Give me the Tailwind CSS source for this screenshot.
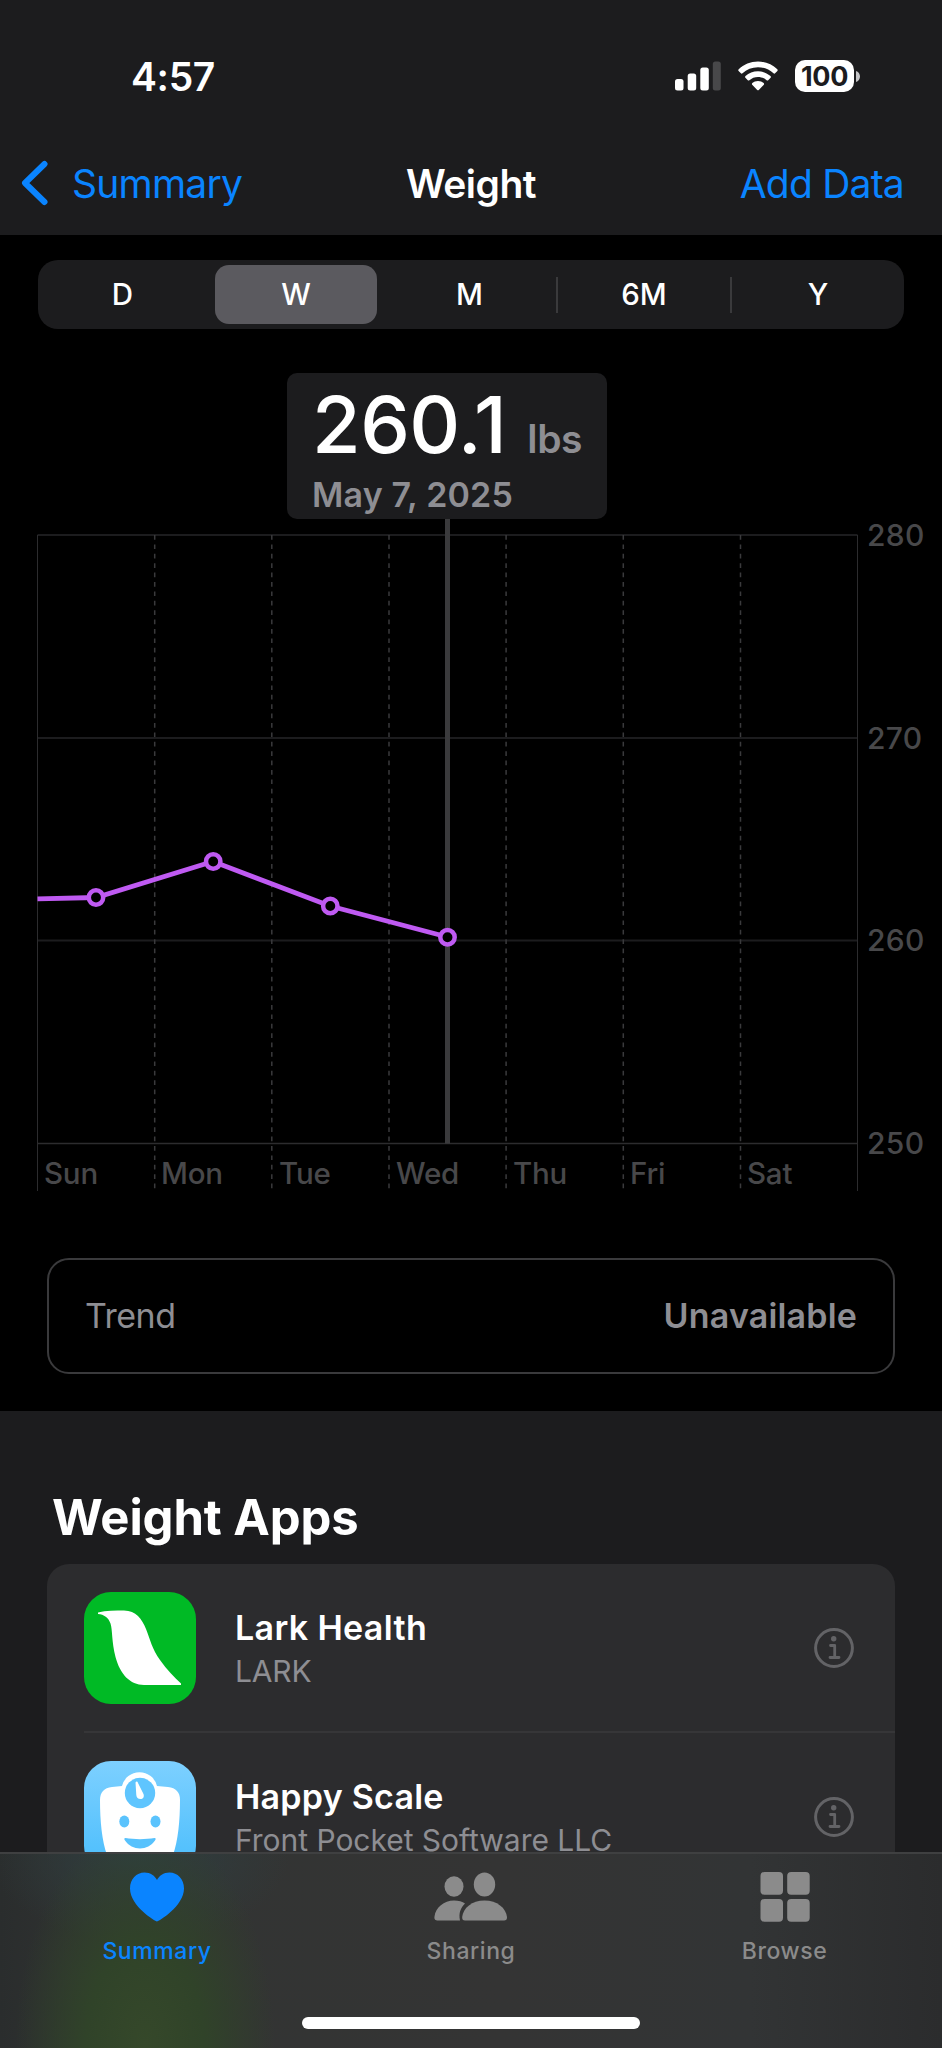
<!DOCTYPE html>
<html lang="en">
<head>
    <meta charset="UTF-8">
    <meta name="viewport" content="width=device-width, initial-scale=1.0">
    <title>Weight</title>
    <script src="https://cdn.jsdelivr.net/npm/@tailwindcss/browser@4"></script>
</head>
<body class="bg-black font-['Inter',sans-serif] text-white">
    <div class="relative flex h-[2048px] w-[942px] flex-col overflow-hidden">
        <!-- Status bar + navigation -->
        <header class="h-[235px] shrink-0 bg-[#1c1c1e]">
            <div class="flex h-[152px] items-center justify-between pl-[131px] pr-[82px]">
                <span class="text-[39px] font-semibold leading-none tracking-[-0.01em]">4:57</span>
                <div class="flex items-center">
                    <svg class="h-[30px] w-[46px]" viewBox="0 0 46 30">
                        <rect x="0" y="18" width="8.5" height="11.5" rx="2.5" fill="#fff"/>
                        <rect x="12.7" y="12.5" width="8.5" height="17" rx="2.5" fill="#fff"/>
                        <rect x="25.3" y="6.5" width="8.5" height="23" rx="2.5" fill="#fff"/>
                        <rect x="37.8" y="0.5" width="8" height="29" rx="2.5" fill="#48484a"/>
                    </svg>
                    <svg class="ml-[17px] h-[30px] w-[40px]" viewBox="0 0 40 30" fill="#fff">
                        <path d="M20 0.5c7.500 0 14.300 2.900 19.300 7.700.5.5.5 1.200.1 1.700l-2.300 2.400c-.4.5-1.200.5-1.600 0C31.400 8.400 26 6.200 20 6.200S8.600 8.400 4.500 12.300c-.5.500-1.200.500-1.600 0L.6 9.900c-.5-.5-.4-1.200.1-1.700C5.700 3.400 12.500.5 20 .5z"/>
                        <path d="M20 10.300c4.800 0 9.200 1.800 12.500 4.800.5.500.5 1.200.1 1.700l-2.400 2.400c-.4.4-1.100.4-1.600 0-2.300-2-5.300-3.300-8.600-3.300s-6.300 1.200-8.600 3.300c-.5.400-1.200.4-1.600 0l-2.400-2.400c-.5-.5-.4-1.200.1-1.700 3.300-3 7.700-4.800 12.500-4.800z"/>
                        <path d="M20 20c2.200 0 4.200.8 5.700 2.100.5.5.5 1.200.1 1.700l-5 5.100c-.4.5-1.100.5-1.600 0l-5-5.100c-.4-.5-.4-1.200.1-1.700C15.800 20.800 17.800 20 20 20z"/>
                    </svg>
                    <div class="ml-[17px] flex h-8 w-[59px] items-center justify-center rounded-[10px] bg-white text-[27px] font-bold leading-none tracking-[-0.01em] text-[#1c1c1e]">100</div>
                    <svg class="ml-0.5 h-[11px] w-[4px]" viewBox="0 0 4 11"><path d="M0 0c2.400.8 4 3 4 5.500S2.400 10.200 0 11z" fill="#c4c4c6"/></svg>
                </div>
            </div>
            <div class="grid h-[62px] grid-cols-3 items-center pl-[21px] pr-[38px] text-[39px] leading-none text-[#0a84ff]">
                <a href="#" class="flex items-center">
                    <svg class="h-[46px] w-[28px]" viewBox="0 0 28 46"><path d="M23.500 4L4 23l19.500 19" fill="none" stroke="#0a84ff" stroke-width="6" stroke-linecap="round" stroke-linejoin="round"/></svg>
                    <span class="ml-[23px] tracking-[-0.02em]">Summary</span>
                </a>
                <h1 class="pl-[17px] text-center font-semibold tracking-[-0.013em] text-white">Weight</h1>
                <a href="#" class="text-right tracking-[-0.02em]">Add Data</a>
            </div>
        </header>

        <!-- Range picker -->
        <nav class="mx-[38px] mt-[25px] grid h-[69px] shrink-0 grid-cols-[171px_174px_173px_174px_174px] items-center rounded-[20px] bg-[#1c1c1e] text-center text-[29.5px] font-medium leading-none">
            <span class="pr-0.5">D</span>
            <span class="mx-[6px] flex h-[59px] items-center justify-center rounded-[14px] bg-[#5b5a5f]">W</span>
            <span>M</span>
            <span class="flex h-9 items-center justify-center border-l-2 border-[#3a3a3c]">6M</span>
            <span class="flex h-9 items-center justify-center border-l-2 border-[#3a3a3c]">Y</span>
        </nav>

        <!-- Chart -->
        <section class="relative h-[927px] shrink-0">
            <svg class="h-[927px] w-[942px]" viewBox="0 329 942 927">
                <g stroke="#1c1c1e" stroke-width="2">
                    <path d="M37.500 535H857.500M37.500 738H857.500M37.500 940.500H857.500"/>
                </g>
                <path d="M37.500 1143.500H857.500" stroke="#2c2c2e" stroke-width="1.500"/>
                <path d="M37.500 535V1191M857.500 535V1191" stroke="#2c2c2e" stroke-width="1"/>
                <path d="M154.700 535V1191M271.800 535V1191M389 535V1191M506.100 535V1191M623.300 535V1191M740.500 535V1191" stroke="#3a3a3c" stroke-width="1.500" stroke-dasharray="4.700 4.700"/>
                <path d="M447.500 519V1143.500" stroke="#3a3a3c" stroke-width="5"/>
                <path d="M37.500 898.800L96 897.500L213 861.500L330 906L447.500 937" fill="none" stroke="#bf5af2" stroke-width="4.800"/>
                <g fill="#000" stroke="#bf5af2" stroke-width="4.500">
                    <circle cx="96" cy="897.500" r="7.200"/>
                    <circle cx="213.200" cy="861.500" r="7.200"/>
                    <circle cx="330.300" cy="906" r="7.200"/>
                    <circle cx="447.500" cy="937.300" r="7.200"/>
                </g>
                <g fill="#48484a" font-size="30" font-weight="500">
                    <g letter-spacing="0.300">
                        <text x="867" y="546">280</text>
                        <text x="867" y="749">270</text>
                        <text x="867" y="951">260</text>
                        <text x="867" y="1154">250</text>
                    </g>
                    <g font-size="29.500" letter-spacing="-0.200">
                        <text x="44" y="1184">Sun</text>
                        <text x="161" y="1184">Mon</text>
                        <text x="279" y="1184">Tue</text>
                        <text x="396" y="1184">Wed</text>
                        <text x="513" y="1184">Thu</text>
                        <text x="630" y="1184">Fri</text>
                        <text x="747" y="1184">Sat</text>
                    </g>
                </g>
            </svg>
            <div class="absolute left-[287px] top-[44px] h-[146px] w-[320px] rounded-[10px] bg-[#1c1c1e] pl-[25px] pt-[12px]">
                <div class="flex items-baseline leading-[78px]">
                    <span class="text-[79px] font-medium tracking-[-0.007em]">260.1</span>
                    <span class="ml-[21px] text-[39px] font-semibold tracking-[-0.01em] text-[#8e8e93]">lbs</span>
                </div>
                <div class="-mt-[4px] text-[34px] font-semibold leading-[42px] tracking-[0.005em] text-[#8e8e93]">May 7, 2025</div>
            </div>
        </section>

        <!-- Trend -->
        <div class="mx-[47px] mt-[2px] flex h-[116px] shrink-0 items-center justify-between rounded-[22px] border-2 border-[#3a3a3c] px-[36px] pb-[2px] text-[34px] text-[#8e8e93]">
            <span class="tracking-[-0.015em]">Trend</span>
            <span class="font-semibold tracking-[0.005em]">Unavailable</span>
        </div>

        <!-- Weight apps -->
        <section class="mt-[37px] flex-1 bg-[#1c1c1e] px-[47px] pt-[77px]">
            <h2 class="pl-[5px] text-[49px] font-bold leading-[60px] tracking-[-0.002em]">Weight Apps</h2>
            <div class="mt-[16px] h-[340px] rounded-t-[22px] bg-[#2c2c2e] pl-[37px]">
                <div class="flex h-[169px] items-center border-b-2 border-[#363638] pr-[41px]">
                    <svg class="h-[112px] w-[112px]" viewBox="0 0 112 112">
                        <rect width="112" height="112" rx="27" fill="#00ba25"/>
                        <path d="M14 20.500C22 18.500 32 18.500 40 18.500C52 18.500 58 27 62 37C66 47 68 57 76 68C83 78 90 85 97 91.500V93H60C46 93 36 82 31.500 65C27.500 50 28.500 37 26.500 31.500C24.500 25.500 20 22.500 14 22Z" fill="#fff"/>
                    </svg>
                    <div class="ml-[39px] flex-1 pt-[3px]">
                        <div class="text-[34px] font-semibold leading-[42px] tracking-[0.01em]">Lark Health</div>
                        <div class="mt-[2px] text-[30px] leading-[40px] tracking-[-0.005em] text-[#8e8e93]">LARK</div>
                    </div>
                    <svg class="h-[40px] w-[40px]" viewBox="0 0 40 40" fill="none" stroke="#636366" stroke-linecap="round" stroke-linejoin="round">
                        <circle cx="20" cy="20" r="18.400" stroke-width="3"/>
                        <path d="M16.500 17.500H20.700V29.500M16 29.500H25" stroke-width="2.800"/>
                        <circle cx="19.700" cy="10.800" r="2.700" fill="#636366" stroke="none"/>
                    </svg>
                </div>
                <div class="flex h-[167px] items-center pr-[41px]">
                    <svg class="h-[112px] w-[112px]" viewBox="0 0 112 112">
                        <defs>
                            <linearGradient id="sky" x1="0" y1="0" x2="0" y2="1">
                                <stop offset="0" stop-color="#7dd0ff"/>
                                <stop offset="0.800" stop-color="#54c1fd"/>
                            </linearGradient>
                        </defs>
                        <rect width="112" height="112" rx="27" fill="url(#sky)"/>
                        <path d="M28 26L38 25A18 18 0 0 1 73 25L84 26C92 27 96 31 96 39C96 60 94 80 89 94C86 102 80 104 72 104H40C32 104 26 102 23 94C18 80 16 60 16 39C16 31 20 27 28 26Z" fill="#fff"/>
                        <circle cx="56" cy="32" r="15.200" fill="#5fc5fe"/>
                        <path d="M51.500 21.500C52.500 20 53.500 20.500 54 22L59.500 33C60.500 36 59 38 56.500 38C54 38 52.500 36.500 52.300 34Z" fill="#fff"/>
                        <ellipse cx="40.300" cy="60.500" rx="5" ry="6" fill="#5ac3fd"/>
                        <ellipse cx="71.500" cy="60.500" rx="5" ry="6" fill="#5ac3fd"/>
                        <path d="M41.500 77C50 78.500 62 78.500 70.500 77C72 77 72 78 71 79.500C64 90 48 90 41 79.500C40 78 40 77 41.500 77Z" fill="#57c2fd"/>
                    </svg>
                    <div class="ml-[39px] flex-1 pt-[3px]">
                        <div class="text-[34px] font-semibold leading-[42px] tracking-[0.007em]">Happy Scale</div>
                        <div class="mt-[2px] text-[30px] leading-[40px] tracking-[-0.001em] text-[#8e8e93]">Front Pocket Software LLC</div>
                    </div>
                    <svg class="h-[40px] w-[40px]" viewBox="0 0 40 40" fill="none" stroke="#636366" stroke-linecap="round" stroke-linejoin="round">
                        <circle cx="20" cy="20" r="18.400" stroke-width="3"/>
                        <path d="M16.500 17.500H20.700V29.500M16 29.500H25" stroke-width="2.800"/>
                        <circle cx="19.700" cy="10.800" r="2.700" fill="#636366" stroke="none"/>
                    </svg>
                </div>
            </div>
        </section>

        <!-- Tab bar, overlaps the list -->
        <nav class="absolute inset-x-0 bottom-0 h-[196px] border-t-2 border-[#3f4041] bg-[#323333] bg-[radial-gradient(ellipse_130px_220px_at_145px_190px,#35482a_0%,#304329_45%,transparent_100%),radial-gradient(ellipse_150px_90px_at_140px_0px,#2f3e40_0%,transparent_100%),linear-gradient(90deg,#2a2d2d_0px,#323433_120px,#343434_500px,#323435_750px,#2b2c2d_942px)]">
            <div class="mx-auto grid w-[942px] grid-cols-3 text-center text-[23px] font-medium leading-[28px] tracking-[0.025em] text-[#8b8b8b]">
                <a href="#" class="flex flex-col items-center pt-[18px] text-[#0a84ff]">
                    <svg class="h-[50px] w-[54px]" viewBox="0 0 54 50"><path d="M27 49.500C25.500 49.500 0 34 0 16.500C0 7 6.500 0.500 14.500 0.500C20.500 0.500 25 4 27 8C29 4 33.500 0.500 39.500 0.500C47.500 0.500 54 7 54 16.500C54 34 28.500 49.500 27 49.500Z" fill="#0a84ff"/></svg>
                    <span class="mt-[15px]">Summary</span>
                </a>
                <a href="#" class="flex flex-col items-center pt-[18px]">
                    <svg class="h-[50px] w-[74px]" viewBox="0 0 74 50" fill="#8b8b8b">
                        <ellipse cx="20" cy="14.500" rx="9.500" ry="10.300"/>
                        <path d="M20 28.500C24.500 28.500 28.500 29.700 31 31.500C26.500 36 24.500 41 26 48.500H4C1.500 48.500 0 47.500 0.500 44.500C1.500 35.500 10 28.500 20 28.500Z"/>
                        <ellipse cx="50.500" cy="12.500" rx="10.700" ry="12"/>
                        <path d="M50.500 28.500C63 28.500 72 36 73 45C73.200 47.500 72 48.500 70 48.500H31C29 48.500 28 47.500 28.200 45C29 36 38 28.500 50.500 28.500Z"/>
                    </svg>
                    <span class="mt-[15px]">Sharing</span>
                </a>
                <a href="#" class="flex flex-col items-center pr-[1px] pt-[18px]">
                    <svg class="h-[50px] w-[50px]" viewBox="0 0 50 50" fill="#8b8b8b">
                        <rect x="0.500" y="0" width="22.500" height="22.700" rx="4"/>
                        <rect x="27.200" y="0" width="22.500" height="22.700" rx="4"/>
                        <rect x="0.500" y="27" width="22.500" height="22.700" rx="4"/>
                        <rect x="27.200" y="27" width="22.500" height="22.700" rx="4"/>
                    </svg>
                    <span class="mt-[15px]">Browse</span>
                </a>
            </div>
            <div class="mx-auto mt-[52px] h-[12px] w-[338px] rounded-full bg-white"></div>
        </nav>
    </div>
</body>
</html>
